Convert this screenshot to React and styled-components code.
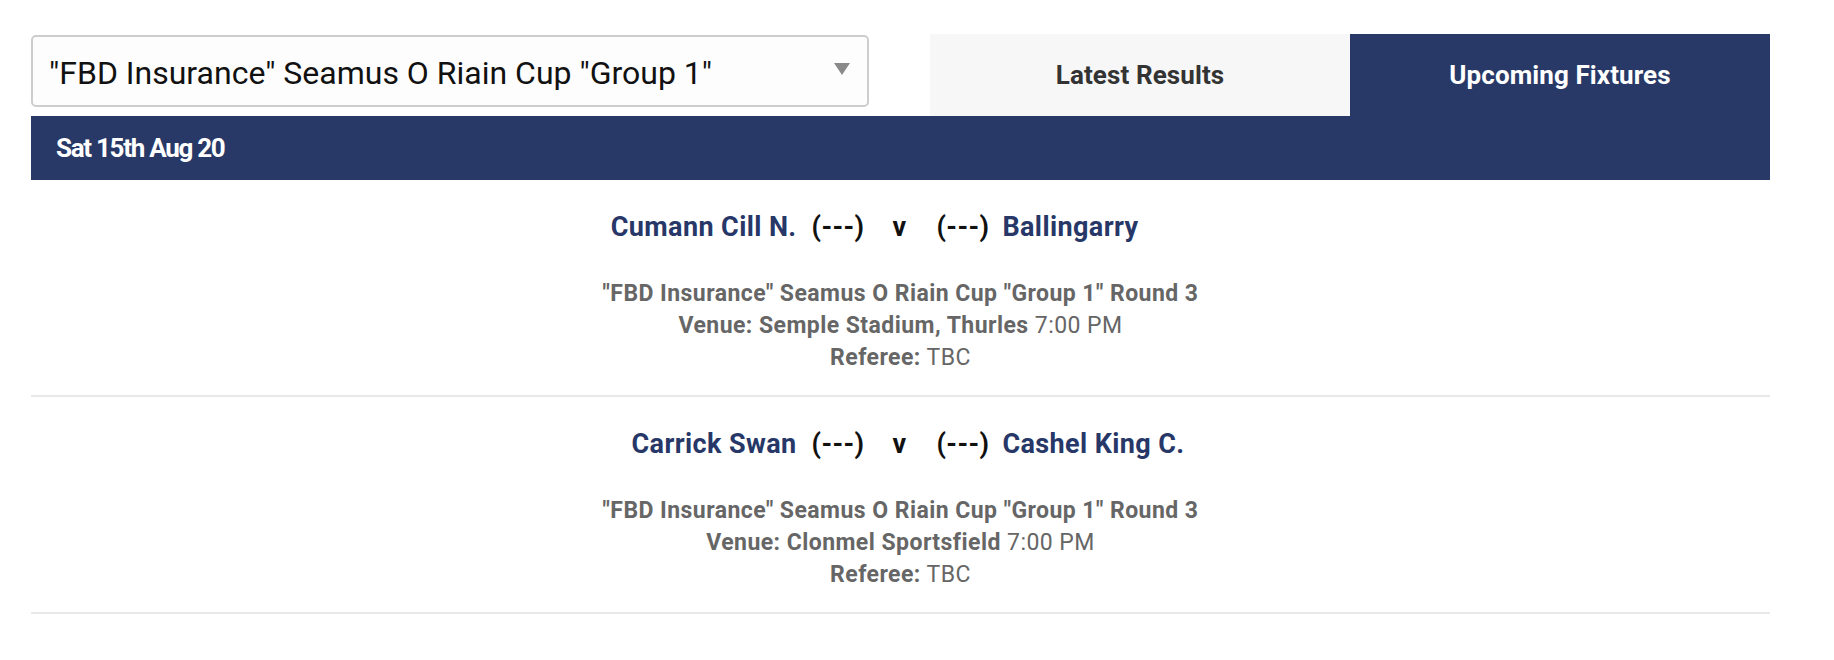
import React from "react";
import styled, { createGlobalStyle } from "styled-components";

const fixtures = [
  {
    home: "Cumann Cill N.",
    away: "Ballingarry",
    competition: "\"FBD Insurance\" Seamus O Riain Cup \"Group 1\" Round 3",
    venue: "Semple Stadium, Thurles",
    time: "7:00 PM",
    referee: "TBC",
  },
  {
    home: "Carrick Swan",
    away: "Cashel King C.",
    competition: "\"FBD Insurance\" Seamus O Riain Cup \"Group 1\" Round 3",
    venue: "Clonmel Sportsfield",
    time: "7:00 PM",
    referee: "TBC",
  },
];

export default function App() {
  return (
    <>
      <GlobalStyle />
      <Page>
        <TopRow>
          <Select>
            <span>"FBD Insurance" Seamus O Riain Cup "Group 1"</span>
            <svg width="16" height="12" viewBox="0 0 16 12">
              <polygon points="0,0 16,0 8,12" fill="#8a8a8a" />
            </svg>
          </Select>
          <Tabs>
            <Tab>Latest Results</Tab>
            <Tab active>Upcoming Fixtures</Tab>
          </Tabs>
        </TopRow>

        <DateBar>Sat 15th Aug 20</DateBar>

        {fixtures.map((f, i) => (
          <Fixture key={i}>
            <Teams>
              <Side align="flex-end" gap="15px">
                <Team>{f.home}</Team>
                <Score>(---)</Score>
              </Side>
              <Versus>v</Versus>
              <Side align="flex-start" gap="13px">
                <Score>(---)</Score>
                <Team>{f.away}</Team>
              </Side>
            </Teams>
            <Details>
              <Line>
                <b>{f.competition}</b>
              </Line>
              <Line>
                <b>Venue: {f.venue}</b> {f.time}
              </Line>
              <Line>
                <b>Referee:</b> {f.referee}
              </Line>
            </Details>
          </Fixture>
        ))}
      </Page>
    </>
  );
}

const GlobalStyle = createGlobalStyle`
  body {
    margin: 0;
    background: #fff;
    font-family: Roboto, "Liberation Sans", sans-serif;
  }
`;

const Page = styled.div`
  padding: 34px 64px 0 31px;
`;

const TopRow = styled.div`
  display: flex;
  align-items: flex-start;
  justify-content: space-between;
`;

const Select = styled.div`
  box-sizing: border-box;
  width: 838px;
  height: 72px;
  margin-top: 1px;
  padding: 4px 17px 0 16px;
  display: flex;
  align-items: center;
  justify-content: space-between;
  border: 2px solid #cdcdcd;
  border-radius: 5px;
  background: #fdfdfd;
  color: #111;
  font-size: 32px;
  cursor: pointer;

  svg {
    margin-top: -8px;
  }
`;

const Tabs = styled.div`
  display: flex;
`;

const Tab = styled.div`
  width: 420px;
  height: 82px;
  display: flex;
  align-items: center;
  justify-content: center;
  font-size: 26px;
  font-weight: 700;
  letter-spacing: 0.1px;
  background: ${(p) => (p.active ? "#283967" : "#f7f7f7")};
  color: ${(p) => (p.active ? "#fff" : "#333")};
  cursor: pointer;
`;

const DateBar = styled.div`
  height: 64px;
  padding-left: 25px;
  display: flex;
  align-items: center;
  background: #283967;
  color: #fff;
  font-size: 26px;
  font-weight: 700;
  letter-spacing: -1.3px;
`;

const Fixture = styled.div`
  padding: 32px 0 21px;
  border-bottom: 2px solid #e9e9e9;
`;

const Teams = styled.div`
  display: grid;
  grid-template-columns: 1fr auto 1fr;
  align-items: center;
  height: 30px;
  font-size: 27px;
  font-weight: 700;
  line-height: 30px;
  letter-spacing: 0.4px;
`;

const Side = styled.div`
  display: flex;
  justify-content: ${(p) => p.align};
  gap: ${(p) => p.gap};
`;

const Team = styled.span`
  color: #273868;
`;

const Score = styled.span`
  color: #111;
`;

const Versus = styled.span`
  padding: 0 30px 0 28px;
  color: #111;
`;

const Details = styled.div`
  margin-top: 36px;
  text-align: center;
  font-size: 23px;
  line-height: 32px;
  letter-spacing: 0.45px;
  color: #666;

  b {
    font-weight: 700;
  }
`;

const Line = styled.div``;
